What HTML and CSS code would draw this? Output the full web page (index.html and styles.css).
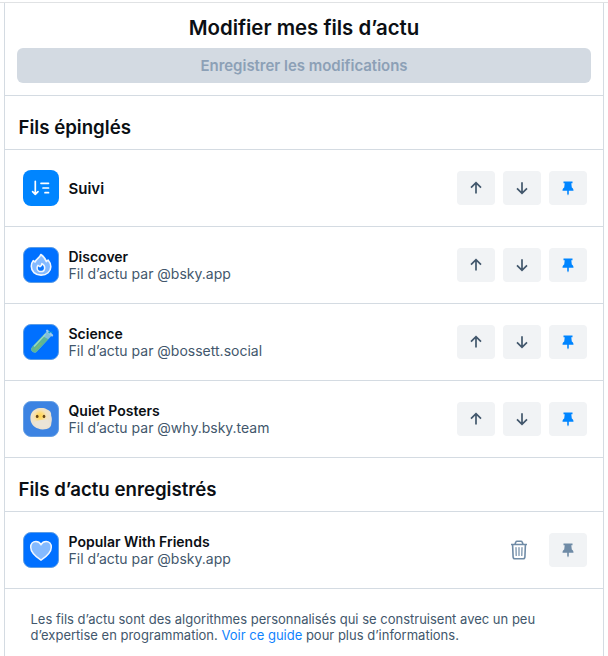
FILE: index.html
```html
<!DOCTYPE html>
<html lang="fr">
<head>
<meta charset="utf-8">
<title>Modifier mes fils d’actu</title>
<link rel="stylesheet" href="styles.css">
</head>
<body>
<svg class="defs" aria-hidden="true">
  <symbol id="up" viewBox="0 0 14 14"><path d="M7 12.600V1.800M2 6.600l5-5 5 5" fill="none" stroke="currentColor" stroke-width="1.700"/></symbol>
  <symbol id="down" viewBox="0 0 14 14"><path d="M7 1.200v10.900M2 7.300l5 5 5-5" fill="none" stroke="currentColor" stroke-width="1.700"/></symbol>
  <symbol id="pin" viewBox="0 0 12 15"><path d="M1.500.5h9v1.800H9.300l.5 4.200c1 .5 1.700 1.500 1.700 3.200H.5c0-1.700.7-2.700 1.700-3.200l.5-4.200H1.500zM5.200 9.700h1.600v3L6 14.400l-.8-1.700z" fill="currentColor"/></symbol>
  <symbol id="trash" viewBox="0 0 18 20"><path d="M1 4.500h16M5 4.200l.8-2.100Q6.100 1.200 7 1.200h4q.9 0 1.200.9l.8 2.100M2.600 4.700l.5 12.300q.1 1.800 1.900 1.800h8q1.800 0 1.900-1.800l.5-12.300" fill="none" stroke="currentColor" stroke-width="1.600"/><path d="M6 7.500l.2 8M9 7.500v8M12 7.500l-.2 8" fill="none" stroke="currentColor" stroke-width="1.200" stroke-linecap="round"/></symbol>
</svg>
<main class="panel">
  <header class="top">
    <h1>Modifier mes fils d’actu</h1>
    <button class="save" disabled>Enregistrer les modifications</button>
  </header>
  <h2>Fils épinglés</h2>
  <section class="row">
    <svg class="avatar" viewBox="0 0 36 36"><rect width="36" height="36" rx="8" fill="#0085ff"/><path d="M12.300 11.300v13M9.600 21.700l2.700 2.700 2.700-2.700M18 13.300h7.500M20 18h5.500M22 22.700h3.500" fill="none" stroke="#fff" stroke-width="1.700" stroke-linecap="round" stroke-linejoin="round"/></svg>
    <div class="info following"><div class="name">Suivi</div></div>
    <div class="actions">
      <button><svg class="arrow"><use href="#up"/></svg></button>
      <button><svg class="arrow"><use href="#down"/></svg></button>
      <button class="pinned"><svg class="pin"><use href="#pin"/></svg></button>
    </div>
  </section>
  <section class="row">
    <svg class="avatar" viewBox="0 0 36 36"><rect x=".5" y=".5" width="35" height="35" rx="7.500" fill="#0070ff" stroke="#5c9de6"/><path d="M17.800 7.500c3.300 2.200 4.800 4.400 5.500 7.100l1.800-1.600c1.700 2 2.700 4.400 2.700 6.700 0 4.900-4 8.400-9.800 8.400s-9.700-3.800-9.700-8.800c0-2.400.7-4.200 1.900-5.600l1.900 1.300c1-3.500 4.600-3.900 5.700-7.500z" fill="#84baff" stroke="#f1f7ff" stroke-width="1.600" stroke-linejoin="round"/><path d="M18.900 16.600c2 1.200 3 2.600 2.800 4.500-.2 2.200-1.600 3.500-3.700 3.500s-3.900-1.500-3.900-3.700c0-1 .3-1.800.8-2.500l2 1.300c1.200-.5 1.900-1.500 2-3.100z" fill="#0875ff" stroke="#f1f7ff" stroke-width="1.500" stroke-linejoin="round"/></svg>
    <div class="info"><div class="name">Discover</div><div class="by">Fil d’actu par @bsky.app</div></div>
    <div class="actions">
      <button><svg class="arrow"><use href="#up"/></svg></button>
      <button><svg class="arrow"><use href="#down"/></svg></button>
      <button class="pinned"><svg class="pin"><use href="#pin"/></svg></button>
    </div>
  </section>
  <section class="row">
    <svg class="avatar" viewBox="0 0 36 36"><rect x=".5" y=".5" width="35" height="35" rx="7.500" fill="#0070ff" stroke="#5c9de6"/><g transform="rotate(43 18 18)"><path d="M15 5.500v22.200a3.200 3.200 0 0 0 6.400 0V5.500z" fill="#7fbfdc"/><path d="M15 12.500v15.200a3.200 3.200 0 0 0 6.400 0V11z" fill="#5cb597"/><path d="M16 9v17" fill="none" stroke="#9adcc4" stroke-width="1.200"/><path d="M19 18.500v9" fill="none" stroke="#79b877" stroke-width="1.600"/><rect x="13.700" y="4.500" width="9" height="2.200" rx="1.100" fill="#9ccaf0"/></g><circle cx="26.300" cy="8.300" r="1.100" fill="#16a8c9"/><circle cx="28.800" cy="8.300" r=".7" fill="#16b4c5"/></svg>
    <div class="info"><div class="name">Science</div><div class="by">Fil d’actu par @bossett.social</div></div>
    <div class="actions">
      <button><svg class="arrow"><use href="#up"/></svg></button>
      <button><svg class="arrow"><use href="#down"/></svg></button>
      <button class="pinned"><svg class="pin"><use href="#pin"/></svg></button>
    </div>
  </section>
  <section class="row">
    <svg class="avatar" viewBox="0 0 36 36"><defs><radialGradient id="face" gradientUnits="userSpaceOnUse" cx="17" cy="15" r="11"><stop offset="0" stop-color="#ffd34f"/><stop offset=".3" stop-color="#ffdc78"/><stop offset=".58" stop-color="#f3e2bd"/><stop offset="1" stop-color="#ebe2d3"/></radialGradient></defs><rect x=".5" y=".5" width="35" height="35" rx="7.500" fill="#3c83e2" stroke="#659fe5"/><path d="M7.400 17c0-5.500 3.800-9.300 9.400-9.900 3-.3 5.200.1 7.200 1.400 3.300 1 4.400 3.200 4.200 6.200.9 2.200.8 4.900.2 7 0 3.700-1.700 5.700-4.800 6.200-3.200.8-6.300.6-8.400-.5-4.700-1-7.800-5.200-7.800-10.400z" fill="url(#face)"/><path d="M11 21q6-3 14-2.500l1.500 6-5 2.500-7-1z" fill="#ebe4d7"/><ellipse cx="14.200" cy="15.400" rx="1.350" ry="1.700" fill="#654417"/><ellipse cx="21" cy="15.400" rx="1.350" ry="1.700" fill="#654417"/></svg>
    <div class="info"><div class="name">Quiet Posters</div><div class="by">Fil d’actu par @why.bsky.team</div></div>
    <div class="actions">
      <button><svg class="arrow"><use href="#up"/></svg></button>
      <button><svg class="arrow"><use href="#down"/></svg></button>
      <button class="pinned"><svg class="pin"><use href="#pin"/></svg></button>
    </div>
  </section>
  <h2>Fils d’actu enregistrés</h2>
  <section class="row">
    <svg class="avatar" viewBox="0 0 36 36"><rect x=".5" y=".5" width="35" height="35" rx="7.500" fill="#0070ff" stroke="#5c9de6"/><path d="M18 28.200C11.300 23.700 7.700 19.800 7.700 15.200c0-3.300 2.100-5.700 5.200-5.700 2.200 0 4 1.100 5.100 3 1.100-1.900 2.900-3 5.100-3 3.100 0 5.200 2.400 5.200 5.700 0 4.600-3.600 8.500-10.300 13z" fill="#84baff" stroke="#f1f7ff" stroke-width="1.500"/></svg>
    <div class="info"><div class="name">Popular With Friends</div><div class="by">Fil d’actu par @bsky.app</div></div>
    <div class="actions saved">
      <button class="delete"><svg class="trash"><use href="#trash"/></svg></button>
      <button class="unpinned"><svg class="pin"><use href="#pin"/></svg></button>
    </div>
  </section>
  <p class="note">Les fils d’actu sont des algorithmes personnalisés qui se construisent avec un peu<br>d’expertise en programmation. <a>Voir ce guide</a> pour plus d’informations.</p>
</main>
</body>
</html>
```
FILE: styles.css
```css
* { box-sizing: border-box; }
body {
  margin: 0;
  padding-top: 2px;
  background: #fff;
  color: #0b0f14;
  font-family: Inter, "Liberation Sans", sans-serif;
  overflow: hidden;
}
body::before { content: ""; display: block; height: 1px; background: #e0e2e4; }
.defs { display: none; }
.panel {
  width: 600px;
  height: 653px;
  margin-left: 4px;
  border: solid #d4dbe2;
  border-width: 0 1px;
}
.top { height: 93px; padding: 13px 12px 0; border-bottom: 1px solid #d4dbe2; }
h1 { margin: 0 0 8px; font-size: 20.4px; line-height: 24px; font-weight: 600; text-align: center; }
button { display: flex; align-items: center; justify-content: center; margin: 0; padding: 0; border: 0; font-family: inherit; }
.save {
  width: 574px;
  height: 35px;
  border-radius: 6px;
  background: #d3dae2;
  color: #8ca0b6;
  font-size: 15px;
  font-weight: 600;
  letter-spacing: -.02px;
}
h2 {
  height: 54px;
  margin: 0;
  padding: 19px 13.5px 0;
  border-bottom: 1px solid #d4dbe2;
  font-size: 18.65px;
  line-height: 24px;
  font-weight: 600;
}
.row { display: flex; align-items: center; height: 77px; padding: 0 16px 0 18px; border-bottom: 1px solid #d4dbe2; }
.avatar { display: block; width: 36px; height: 36px; margin-right: 9.5px; }
.info { flex: 1; padding-bottom: 1px; }
.name { font-size: 14px; line-height: 17px; font-weight: 600; }
.following { padding: 1px 0 0; }
.following .name { font-size: 15px; }
.by { color: #42576c; font-size: 14px; line-height: 17px; }
.actions { display: flex; gap: 8px; }
.actions button { width: 38px; height: 34px; border-radius: 4px; background: #f1f3f5; color: #42576c; }
.actions .pinned { color: #0085ff; }
.actions .unpinned { color: #6f8ba6; }
.actions .delete { background: none; color: #6f8ba6; }
.saved { gap: 11px; }
.arrow { width: 14px; height: 14px; }
.pin { width: 12px; height: 15px; }
.trash { width: 18px; height: 20px; }
.note { margin: 0; padding: 22px 25.5px 0; color: #42576c; font-size: 13px; line-height: 16px; white-space: nowrap; }
.note a { color: #1083fe; }
```
